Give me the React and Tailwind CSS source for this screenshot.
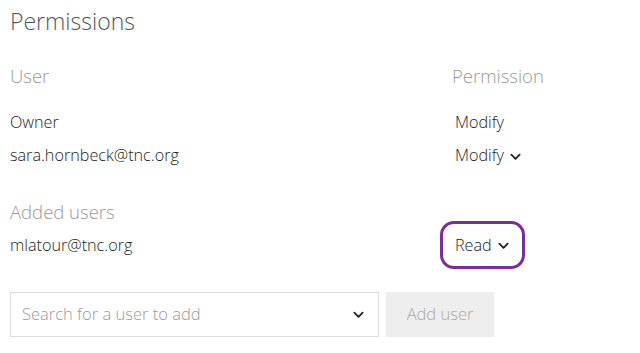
function Chevron({ className = '' }) {
  return (
    <svg viewBox="0 0 12 8" className={className} fill="none" stroke="currentColor" strokeWidth="2" strokeLinecap="round" strokeLinejoin="round">
      <path d="M1.5 1.5 6 6l4.5-4.5" />
    </svg>
  );
}

function PermissionCell({ label, dropdown, focused }) {
  return (
    <div
      className={`inline-flex items-center gap-[6px] h-[48px] pl-[12px] pr-[13px] rounded-[14px] border-[3px] ${
        focused ? 'border-[#7a2e9c]' : 'border-transparent'
      }`}
    >
      <span>{label}</span>
      {dropdown && <Chevron className="w-[11px] h-[8px] mt-[2px] text-[#222]" />}
    </div>
  );
}

export default function App() {
  return (
    <div className="w-[640px] h-[353px] bg-white px-[10px] overflow-hidden text-[#222] font-['Open_Sans',sans-serif]">
      {/* Title */}
      <div className="h-[42px] flex items-center">
        <h2 className="text-[23px] font-light text-[#555]">Permissions</h2>
      </div>

      {/* Column headers */}
      <div className="mt-[18px] h-[32px] flex items-center text-[18.5px] font-light text-[#9a9a9a]">
        <div className="w-[430px]">User</div>
        <div className="pl-[12px]">Permission</div>
      </div>

      {/* Existing users */}
      <div className="mt-[14px] text-[16.2px] font-[350]">
        <div className="h-[33px] flex items-center">
          <div className="w-[430px]">Owner</div>
          <PermissionCell label="Modify" />
        </div>
        <div className="h-[33px] flex items-center">
          <div className="w-[430px]">sara.hornbeck@tnc.org</div>
          <PermissionCell label="Modify" dropdown />
        </div>
      </div>

      {/* Added users */}
      <div className="mt-[31px] h-[18px] flex items-center text-[18.5px] font-light text-[#9a9a9a]">
        Added users
      </div>
      <div className="h-[48px] flex items-center text-[16.2px] font-[350]">
        <div className="w-[430px]">mlatour@tnc.org</div>
        <PermissionCell label="Read" dropdown focused />
      </div>

      {/* Add user */}
      <div className="mt-[23px] flex gap-[7px]">
        <div className="w-[369px] h-[45px] border border-[#dcdcdc] flex items-center pl-[11px] pr-[14px]">
          <span className="flex-1 text-[16.5px] font-light text-[#9a9a9a]">Search for a user to add</span>
          <Chevron className="w-[11px] h-[8px] text-[#222]" />
        </div>
        <button className="w-[108px] h-[45px] bg-[#eeeeee] text-[16.5px] font-light text-[#aaaaaa]">
          Add user
        </button>
      </div>
    </div>
  );
}
